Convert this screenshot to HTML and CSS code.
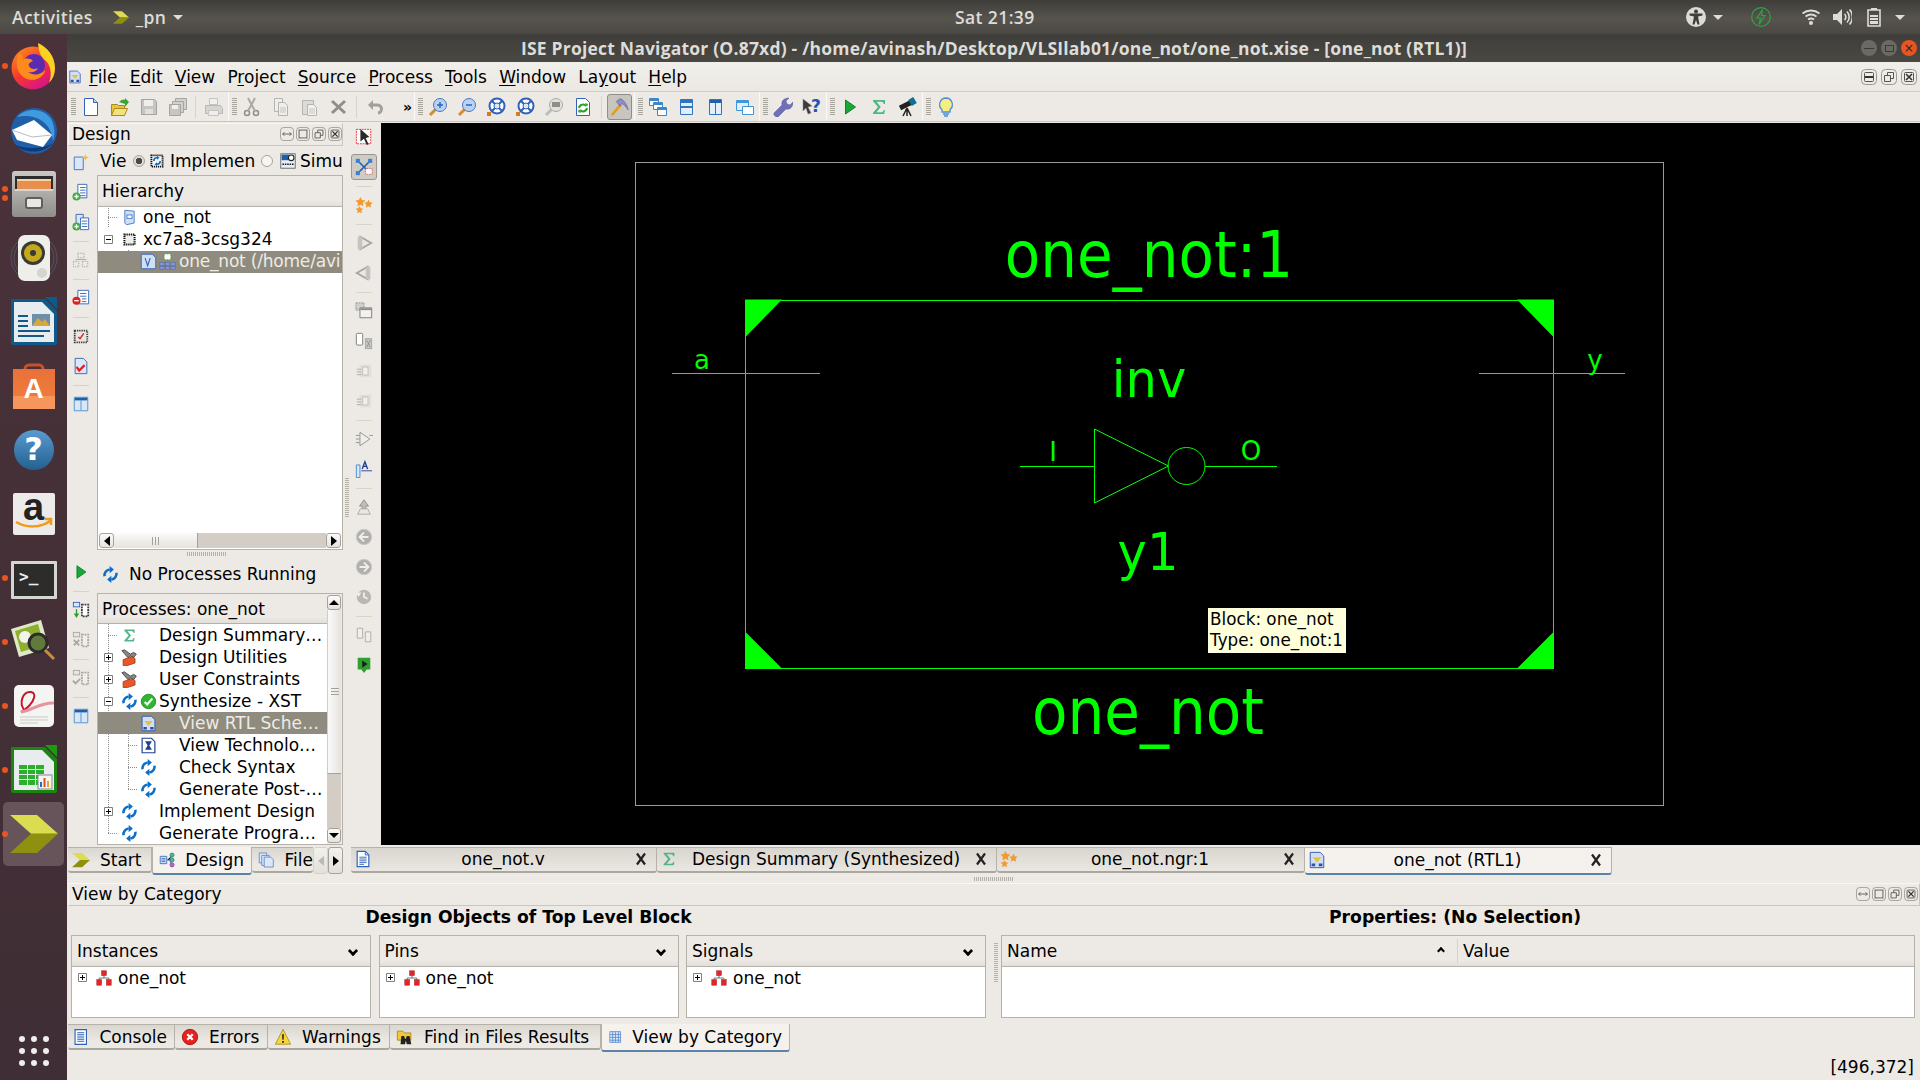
FILE: index.html
```html
<!DOCTYPE html>
<html lang="en">
<head>
  <meta charset="UTF-8">
  <title>ISE Project Navigator</title>
  <link rel="stylesheet" href="styles.css">
</head>
<body>
  <!-- icon sheet -->
  <svg class="defs" xmlns="http://www.w3.org/2000/svg">
    <defs>
      <linearGradient id="g-fox" x1="0" y1="0" x2="0.7" y2="1"><stop offset="0" stop-color="#ff9a1f"/><stop offset=".55" stop-color="#f5372e"/><stop offset="1" stop-color="#d6128c"/></linearGradient>
      <linearGradient id="g-store" x1="0" y1="0" x2="0" y2="1"><stop offset="0" stop-color="#e9703a"/><stop offset="1" stop-color="#f0813e"/></linearGradient>
      <linearGradient id="g-help" x1="0" y1="0" x2="0" y2="1"><stop offset="0" stop-color="#5a9bd0"/><stop offset="1" stop-color="#24608f"/></linearGradient>
      <linearGradient id="g-grey" x1="0" y1="0" x2="0" y2="1"><stop offset="0" stop-color="#c9c8c4"/><stop offset="1" stop-color="#8f8e8a"/></linearGradient>

      <symbol id="ise" viewBox="0 0 144 114"><path fill="#dcdc50" d="M0 0h81l63 56H63z"/><path fill="#909010" d="M63 56h81l-63 58H0z"/></symbol>

      <!-- dock -->
      <symbol id="d-firefox" viewBox="0 0 50 50"><circle cx="24" cy="27" r="21.500" fill="url(#g-fox)"/><path fill="#ffd21f" d="M29 2c9 4 17 13 17 25 0 6-2 11-6 15 3-8 2-17-3-22-3-3-7-5-8-18z"/><circle cx="25" cy="24" r="11" fill="#5a2bb0"/><path fill="#ff8a1c" d="M10 12c-2 5-3 9-2 14 2 10 12 15 20 12 5-2 8-6 8-9-4 5-12 6-17 2 5 1 9-1 10-4-3 2-8 1-9-2-1-2 1-4 4-5-3-3-8-3-10-1 0-3 0-5-4-7z"/></symbol>
      <symbol id="d-thunderbird" viewBox="0 0 50 50"><circle cx="25" cy="26" r="23" fill="#1f5fa8"/><path fill="#0d3a78" d="M6 40c8 8 28 10 38-2-6 5-25 7-38 2z"/><path fill="#3f9ae0" d="M8 12C16 3 34 2 42 14c3 5 5 14 2 22-1-10-6-18-14-22-6-3-14-4-22-2z"/><path fill="#fff" d="M3 25l22-10 18 15-9 12L8 35z"/><path fill="none" stroke="#b7bcc6" d="M3 25l20 7 20-2"/></symbol>
      <symbol id="d-files" viewBox="0 0 50 50"><rect x="3" y="2" width="44" height="46" rx="3" fill="url(#g-grey)"/><rect x="6" y="7" width="38" height="15" fill="#2b2b2b"/><rect x="8" y="10" width="34" height="10" fill="#e98f4e"/><rect x="8" y="10" width="34" height="2" fill="#f7d3a5"/><rect x="6" y="20" width="38" height="2" fill="#d8d6d2"/><rect x="17" y="29" width="16" height="10" rx="2" fill="#e8e8e6" stroke="#5f5f5d" stroke-width="2"/></symbol>
      <symbol id="d-sound" viewBox="0 0 50 50"><g fill="none" stroke="#5b6d80" stroke-opacity=".55"><circle cx="25" cy="25" r="23"/><circle cx="25" cy="25" r="20"/></g><rect x="9" y="2" width="32" height="46" rx="7" fill="#eeeeea"/><circle cx="24" cy="20" r="12" fill="#3b3a30"/><circle cx="24" cy="20" r="9" fill="#c4a81d"/><circle cx="24" cy="20" r="3" fill="#3b3a30"/><circle cx="33" cy="40" r="5" fill="#d5d5d0"/></symbol>
      <symbol id="d-writer" viewBox="0 0 50 50"><path fill="#0f5a8a" d="M2 2h34l12 12v32a2 2 0 0 1-2 2H4a2 2 0 0 1-2-2z"/><path fill="#e8ecee" d="M5 5h28l12 12v28H5z"/><path fill="#0f5a8a" d="M36 0h12v12z"/><path fill="#0f5a8a" d="M9 18h10v2H9zM9 23h10v2H9zM9 28h10v2H9zM9 33h32v2H9zM9 38h26v2H9z"/><rect x="23" y="17" width="18" height="12" fill="#6d8fa8"/><path fill="#d8a93a" d="M23 29l6-8 4 4 3-3 5 7z"/></symbol>
      <symbol id="d-store" viewBox="0 0 50 50"><path fill="none" stroke="#c4532a" stroke-width="3" d="M16 14V8a4 4 0 0 1 4-4h10a4 4 0 0 1 4 4v6"/><path fill="url(#g-store)" d="M4 8h42v40H4z"/><path fill="#f6955c" d="M4 35h42v13H4z"/></symbol>
      <symbol id="d-help" viewBox="0 0 50 50"><circle cx="25" cy="25" r="20" fill="url(#g-help)"/></symbol>
      <symbol id="d-amazon" viewBox="0 0 50 50"><rect x="4" y="4" width="42" height="42" rx="2" fill="#ecebe9"/><path fill="none" stroke="#f29a1c" stroke-width="2.500" d="M7 33c10 6 25 6 34-1M36 30h6v6"/></symbol>
      <symbol id="d-terminal" viewBox="0 0 50 50"><rect x="2" y="8" width="46" height="38" rx="1" fill="#d5d5d2"/><rect x="5" y="11" width="40" height="32" fill="#2c2c2a"/></symbol>
      <symbol id="d-viewer" viewBox="0 0 50 50"><path fill="#dfe8c8" d="M2 12L32 3l8 28-30 9z"/><path fill="#8eb02e" d="M6 14l23-7 6 21-23 7z"/><circle cx="16" cy="20" r="6" fill="#f3f3ee"/><circle cx="29" cy="26" r="9" fill="#5f7a3c" stroke="#2b2b2b" stroke-width="3"/><path stroke="#c98e3c" stroke-width="3" d="M36 33l9 9"/></symbol>
      <symbol id="d-pdf" viewBox="0 0 50 50"><rect x="5" y="4" width="40" height="42" rx="5" fill="#f4f4f2"/><path fill="none" stroke="#c4172c" stroke-width="2" d="M16 30c-7-8-2-20 6-19 6 1 3 9-2 14-3 3-6 5-8 6"/><path fill="none" stroke="#e5949c" stroke-width="3" d="M12 31c10-1 20-10 33-9"/><path stroke="#c9c9c6" d="M11 36h28M11 39h28M11 42h18"/></symbol>
      <symbol id="d-calc" viewBox="0 0 50 50"><path fill="#1c8512" d="M2 2h34l12 12v32a2 2 0 0 1-2 2H4a2 2 0 0 1-2-2z"/><path fill="#e8ecee" d="M5 5h28l12 12v28H5z"/><path fill="#1c9a12" d="M36 0h12v12z"/><path fill="#2ab02c" d="M10 20h25v20H10z"/><path stroke="#e8ecee" d="M10 24.500h25M10 29.500h25M10 34.500h25M18.500 20v20M26.500 20v20"/><rect x="29" y="30" width="14" height="14" fill="#f4f4f2" stroke="#888"/><path fill="#2070c0" d="M31 37h2v5h-2z"/><path fill="#e05020" d="M34.500 33h2v9h-2z"/><path fill="#e8a820" d="M38 36h2v6h-2z"/></symbol>

      <!-- window chrome -->
      <symbol id="w-float" viewBox="0 0 16 16"><rect x=".5" y=".5" width="15" height="15" rx="4" fill="none" stroke="#9a9892"/><path fill="none" stroke="#55534e" d="M3 8h10M5 6L3 8l2 2M11 6l2 2-2 2"/></symbol>
      <symbol id="w-max" viewBox="0 0 16 16"><rect x=".5" y=".5" width="15" height="15" rx="4" fill="none" stroke="#9a9892"/><rect x="3.500" y="3.500" width="9" height="9" fill="none" stroke="#55534e"/></symbol>
      <symbol id="w-restore" viewBox="0 0 16 16"><rect x=".5" y=".5" width="15" height="15" rx="4" fill="none" stroke="#9a9892"/><path fill="none" stroke="#55534e" d="M3.500 6.500h6v6h-6zM6.500 6.500v-3h6v6h-3"/></symbol>
      <symbol id="w-close" viewBox="0 0 16 16"><rect x=".5" y=".5" width="15" height="15" rx="4" fill="none" stroke="#9a9892"/><rect x="3.500" y="3.500" width="9" height="9" rx="1" fill="none" stroke="#55534e"/><path stroke="#333" stroke-width="1.600" d="M5 5l6 6M11 5l-6 6"/></symbol>
      <symbol id="w-min" viewBox="0 0 16 16"><rect x=".5" y=".5" width="15" height="15" rx="4" fill="none" stroke="#9a9892"/><rect x="3.500" y="3.500" width="9" height="9" rx="1" fill="none" stroke="#55534e"/><path stroke="#333" stroke-width="2" d="M4 8h8"/></symbol>

      <!-- toolbar -->
      <symbol id="t-new" viewBox="0 0 20 20"><path fill="#fff" stroke="#2f62b8" d="M3.500 1.500h9l4 4v13h-13z"/><path fill="#c8d8f0" stroke="#2f62b8" d="M12.500 1.500v4h4"/></symbol>
      <symbol id="t-open" viewBox="0 0 20 20"><path fill="#e8c43c" stroke="#a88a20" d="M1.500 7.500h6l1 1h6v10h-13z"/><path fill="#f6e27a" stroke="#a88a20" d="M1.500 18.500l3-7h13l-3 7z"/><path fill="#36a82e" d="M9 5c3-3 5-3 6-2V1l4 4-4 5V7c-2-1-4-1-6-2z"/></symbol>
      <symbol id="t-save" viewBox="0 0 20 20"><path fill="#c6c5c1" stroke="#a5a4a0" d="M2.500 2.500h13l2 2v13h-15z"/><rect x="5" y="3" width="9" height="6" fill="#efeeea"/><rect x="6" y="12" width="8" height="5" fill="#e0dfdb"/></symbol>
      <symbol id="t-saveall" viewBox="0 0 20 20"><path fill="#d2d1cd" stroke="#a5a4a0" d="M7.500 1.500h11v11h-11z"/><path fill="#d2d1cd" stroke="#a5a4a0" d="M4.500 4.500h11v11h-11z"/><path fill="#c6c5c1" stroke="#a5a4a0" d="M1.500 7.500h11v11h-11z"/><rect x="4" y="8" width="6" height="4" fill="#efeeea"/></symbol>
      <symbol id="t-print" viewBox="0 0 20 20"><path fill="#f0f0ee" stroke="#c4c3bf" d="M5.500 1.500h8v6h-8z"/><path fill="#d6d5d1" stroke="#b8b7b3" d="M1.500 8.500h15l2 3v5h-17z"/><path fill="#eee" stroke="#c4c3bf" d="M4.500 13.500h10v5h-10z"/></symbol>
      <symbol id="t-cut" viewBox="0 0 20 20"><g fill="none" stroke="#8f8e8a" stroke-width="1.500"><circle cx="5" cy="16" r="2.500"/><circle cx="14" cy="16" r="2.500"/></g><path stroke="#aaa9a5" stroke-width="2" d="M6 14L13 1M13 14L6 1"/></symbol>
      <symbol id="t-copy" viewBox="0 0 20 20"><g fill="#eeeeea" stroke="#b4b3af"><path d="M3.500 1.500h8v13h-8z"/><path d="M7.500 5.500h6l3 3v10h-9z"/></g><path stroke="#c6c5c1" d="M9 11h6M9 13h6M9 15h6"/></symbol>
      <symbol id="t-paste" viewBox="0 0 20 20"><path fill="#dcdbd7" stroke="#b4b3af" d="M2.500 3.500h11v14h-11z"/><path fill="#f2f1ee" stroke="#b4b3af" d="M7.500 7.500h6l3 3v8h-9z"/><path stroke="#c6c5c1" d="M9 12h6M9 14h6M9 16h6"/></symbol>
      <symbol id="t-del" viewBox="0 0 20 20"><path stroke="#8f8e8a" stroke-width="3" d="M3 4l13 12M16 4L3 16"/></symbol>
      <symbol id="t-undo" viewBox="0 0 20 20"><path fill="none" stroke="#a09f9b" stroke-width="3" d="M6 8h6a4 4 0 0 1 1 8"/><path fill="#a09f9b" d="M8 3v10L3 8z"/></symbol>
      <symbol id="t-zoomin" viewBox="0 0 20 20"><path stroke="#d88a30" stroke-width="3" d="M8 12l-6 6"/><circle cx="12" cy="8" r="6.500" fill="#b8d4f4" stroke="#4a78c0"/><path stroke="#2f62b8" stroke-width="1.500" d="M9 8h6M12 5v6"/></symbol>
      <symbol id="t-zoomout" viewBox="0 0 20 20"><path stroke="#d88a30" stroke-width="3" d="M8 12l-6 6"/><circle cx="12" cy="8" r="6.500" fill="#b8d4f4" stroke="#4a78c0"/><path stroke="#2f62b8" stroke-width="1.500" d="M9 8h6"/></symbol>
      <symbol id="t-fit" viewBox="0 0 20 20"><circle cx="11" cy="9" r="7.500" fill="#fff" stroke="#2f62b8" stroke-width="2"/><circle cx="11" cy="9" r="3" fill="#dbe7f7" stroke="#2f62b8"/><path stroke="#2f62b8" stroke-width="2" d="M6 4l3 3M16 4l-3 3M6 14l3-3M16 14l-3-3"/><rect x="1" y="15" width="4" height="4" fill="#d87a20"/></symbol>
      <symbol id="t-zoomgrey" viewBox="0 0 20 20"><path stroke="#bdbcb8" stroke-width="3" d="M8 12l-6 6"/><circle cx="12" cy="8" r="6.500" fill="#e2e1dd" stroke="#aaa9a5"/><rect x="8" y="5" width="8" height="5" fill="#8f8e8a"/></symbol>
      <symbol id="t-refresh" viewBox="0 0 20 20"><path fill="#fff" stroke="#2f62b8" d="M3.500 1.500h9l4 4v13h-13z"/><path fill="none" stroke="#2ea02a" stroke-width="2" d="M6 11a4 4 0 0 1 7-2M14 11a4 4 0 0 1-7 2"/><path fill="#2ea02a" d="M12 6l3 1-1 3zM8 16l-3-1 1-3z"/></symbol>
      <symbol id="t-hammer" viewBox="0 0 22 22"><path stroke="#e0a020" stroke-width="3" d="M2 20L12 8"/><path fill="#8f8fc8" stroke="#6d6da8" d="M7 5l4-3c4 1 7 5 9 12-3-4-5-6-7-7l-2 3z"/></symbol>
      <symbol id="t-win1" viewBox="0 0 20 20"><g fill="#fff" stroke="#3f86c8"><path d="M1.500 1.500h9v7h-9z"/><path d="M5.500 5.500h9v7h-9z"/><path d="M9.500 10.500h9v8h-9z"/></g><g fill="#3f86c8"><path d="M2 2h8v2H2zM6 6h8v2H6zM10 11h8v2h-8z"/></g></symbol>
      <symbol id="t-win2" viewBox="0 0 20 20"><path fill="#e3eefa" stroke="#2f76c0" d="M3.500 2.500h12v15h-12z"/><path fill="#2f76c0" d="M4 3h11v3H4zM4 9h11v2H4z"/></symbol>
      <symbol id="t-win3" viewBox="0 0 20 20"><path fill="#e3eefa" stroke="#2f76c0" d="M3.500 2.500h12v15h-12z"/><path fill="#1f5ea8" d="M4 3h11v3H4z"/><path stroke="#2f76c0" d="M9.500 6v11"/></symbol>
      <symbol id="t-win4" viewBox="0 0 20 20"><path fill="#e3eefa" stroke="#3f96d8" d="M1.500 3.500h12v10h-12z"/><path fill="#3f96d8" d="M2 4h11v2H2z"/><path fill="#fff" stroke="#3f96d8" d="M7.500 9.500h11v8h-11z"/></symbol>
      <symbol id="t-wrench" viewBox="0 0 20 20"><path fill="#7070b8" stroke="#5858a0" stroke-width=".5" d="M1 16l8-8c-1-4 2-7 7-7l-3 3 1 3 3 1 3-3c0 5-3 8-7 7l-8 8c-2 1-5-2-4-4z"/></symbol>
      <symbol id="t-whatis" viewBox="0 0 20 20"><path fill="#3c3c3c" stroke="#888" stroke-width=".5" d="M1 2l9 7-4 1 3 6-3 1-2-6-3 3z"/></symbol>
      <symbol id="t-play" viewBox="0 0 20 20"><path fill="#18a838" stroke="#0f8028" d="M5.500 3v14l10-7z"/></symbol>
      <symbol id="t-sigma" viewBox="0 0 20 20"><path fill="#4fb884" d="M4 3h12v4h-1.200c-.4-1.500-1.300-2.300-2.800-2.300H7.500L11.800 10l-4.300 5.300H12c1.500 0 2.400-.8 2.800-2.300H16l-.8 4H4v-1.300L9 10 4 4.300z"/></symbol>
      <symbol id="t-scope" viewBox="0 0 20 20"><path stroke="#222" stroke-width="1.500" d="M9 11l-4 8M9 11l4 8M9 11v8"/><path stroke="#222" stroke-width="5" d="M2 11L14 5"/><path stroke="#0d7090" stroke-width="7" d="M12 6l5-3"/></symbol>
      <symbol id="t-bulb" viewBox="0 0 20 20"><path fill="#f8ee80" stroke="#4a90d8" stroke-width="1.300" d="M10 1a6.500 6.500 0 0 0-4 11.500V15h8v-2.500A6.500 6.500 0 0 0 10 1z"/><path stroke="#4a90d8" stroke-width="1.500" d="M7 17h6M8 19h4"/></symbol>

      <!-- palette -->
      <symbol id="p-select" viewBox="0 0 20 20"><rect x="1.500" y="1.500" width="16" height="16" fill="#fff" stroke="#e02020" stroke-dasharray="2 1"/><path fill="#2a2a2a" d="M6 1l10 9-4 1 3 7-2 1-3-7-4 3z"/></symbol>
      <symbol id="p-net" viewBox="0 0 22 22"><path stroke="#2060b8" stroke-width="2" d="M4 4l14 14M18 4L4 18"/><rect x="1" y="1" width="5" height="5" fill="#3d80d0"/><rect x="16" y="1" width="5" height="5" fill="#3d80d0"/><rect x="1" y="16" width="5" height="5" fill="#3d80d0"/><rect x="13" y="13" width="8" height="7" fill="#fff" stroke="#e02020" stroke-dasharray="1 1"/></symbol>
      <symbol id="p-stars" viewBox="0 0 20 20"><g fill="#f09a30"><path d="M6 1l1.700 3.500 3.800.5-2.800 2.700.7 3.800L6 9.700l-3.400 1.800.7-3.800L.5 5l3.800-.5zM15 4l1.400 3 3.300.4-2.400 2.300.6 3.300-2.900-1.600-2.900 1.600.6-3.300-2.400-2.300 3.300-.4zM5 11l1.300 2.700 3 .4-2.200 2.100.5 3L5 17.800l-2.600 1.400.5-3-2.200-2.100 3-.4z"/></g></symbol>
      <symbol id="p-tri-r" viewBox="0 0 20 20"><path fill="#e8e7e3" stroke="#a5a4a0" stroke-width="2" d="M6 3l12 7-12 7z"/><path fill="#c4c3bf" d="M3 3h5v14H3z"/></symbol>
      <symbol id="p-tri-l" viewBox="0 0 20 20"><path fill="#e8e7e3" stroke="#a5a4a0" stroke-width="2" d="M14 3L2 10l12 7z"/><path fill="#c4c3bf" d="M12 3h5v14h-5z"/></symbol>
      <symbol id="p-chipwin" viewBox="0 0 20 20"><rect x="1" y="1" width="9" height="8" fill="#d0cfcb" stroke="#8f8e8a" stroke-dasharray="2 1"/><path fill="#f2f1ee" stroke="#777" d="M5.500 6.500h13v11h-13z"/><path fill="#888" d="M6 7h12v2H6z"/></symbol>
      <symbol id="p-rectx" viewBox="0 0 20 20"><rect x="1.500" y="1.500" width="7" height="13" rx="1" fill="#fff" stroke="#777"/><rect x="11.500" y="7.500" width="7" height="11" fill="#c9c8c4" stroke="#a5a4a0"/><path stroke="#8f8e8a" d="M13 9l4 8M17 9l-4 8"/></symbol>
      <symbol id="p-fadedoc" viewBox="0 0 20 20"><rect x="5" y="3" width="13" height="14" fill="#e0dfdb"/><path fill="#efeeea" stroke="#bdbcb8" d="M8.500 5.500h6v9h-6z"/><path stroke="#aaa9a5" d="M2 8h5M2 11h5M2 14h5"/></symbol>
      <symbol id="p-gate" viewBox="0 0 20 20"><path fill="#efeeea" stroke="#8f8e8a" d="M5.500 2.500v15l11-7.500z"/><path stroke="#8f8e8a" d="M1 6h4M1 10h4M1 14h4M16 6h4"/></symbol>
      <symbol id="p-label" viewBox="0 0 20 20"><path fill="#d8e8fa" stroke="#3f86d8" d="M1.500 5.500h4v14h-4z"/><path fill="none" stroke="#1f3f98" stroke-width="1.500" d="M8 10l3-8 3 8M9 7h4"/><path stroke="#1f3f98" d="M7 12h12"/></symbol>
      <symbol id="p-up" viewBox="0 0 20 20"><path fill="#bdbcb8" stroke="#8f8e8a" d="M8 2h4v3h3l-5 7-5-7h3z" transform="rotate(180 10 7)"/><path fill="#e8e7e3" stroke="#aaa9a5" d="M3 18l3-6h8l3 6z"/></symbol>
      <symbol id="p-back" viewBox="0 0 20 20"><circle cx="10" cy="10" r="8.500" fill="#b0afab" stroke="#c9c8c4"/><path fill="none" stroke="#efeeea" stroke-width="2" d="M15 10H6M10 5l-5 5 5 5"/></symbol>
      <symbol id="p-forward" viewBox="0 0 20 20"><circle cx="10" cy="10" r="8.500" fill="#b0afab" stroke="#c9c8c4"/><path fill="none" stroke="#efeeea" stroke-width="2" d="M5 10h9M10 5l5 5-5 5"/></symbol>
      <symbol id="p-history" viewBox="0 0 20 20"><circle cx="10" cy="10" r="8" fill="#b8b7b3"/><path fill="none" stroke="#efeeea" stroke-width="2" d="M10 5v5l4 2"/><path fill="#efeeea" d="M1 5l6 0-3 5z"/></symbol>
      <symbol id="p-pair" viewBox="0 0 20 20"><g fill="#efeeea" stroke="#aaa9a5"><path d="M2.500 2.500h6v11h-6z"/><path d="M11.500 6.500h6v11h-6z"/></g></symbol>
      <symbol id="p-pin" viewBox="0 0 20 20"><path fill="#2ea02e" d="M3 2h14v13h-4l-3 4-3-4H3z"/><path fill="#1d1d1d" d="M8 5l6 4-6 4z"/></symbol>

      <!-- side columns -->
      <symbol id="s-newsrc" viewBox="0 0 20 20"><path fill="#dbe7f7" stroke="#3a6fc0" d="M2.500 4.500h10v14h-10z"/><path fill="#f0c030" d="M15 1l1 3 3 1-3 1-1 3-1-3-3-1 3-1z"/></symbol>
      <symbol id="s-addsrc" viewBox="0 0 20 20"><path fill="#fff" stroke="#2f62b8" d="M6.500 1.500h10v15h-10z"/><path stroke="#2f62b8" d="M9 5h6M9 8h6M9 11h6M9 14h6"/><circle cx="5" cy="15" r="4.500" fill="#3eae3e"/><path stroke="#fff" stroke-width="1.500" d="M2.500 15h5M5 12.500v5"/></symbol>
      <symbol id="s-addcopy" viewBox="0 0 20 20"><path fill="#dbe7f7" stroke="#2f62b8" d="M4.500 1.500h8v14h-8z"/><path fill="#fff" stroke="#2f62b8" d="M9.500 5.500h9v13h-9z"/><path stroke="#2f62b8" d="M11 9h6M11 12h6M11 15h6"/><circle cx="5" cy="15" r="4.500" fill="#3eae3e"/><path stroke="#fff" stroke-width="1.500" d="M2.500 15h5M5 12.500v5"/></symbol>
      <symbol id="s-hier" viewBox="0 0 20 20"><g fill="none" stroke="#a8a7a3" stroke-dasharray="1.500 1"><rect x="6.500" y="2.500" width="7" height="5"/><rect x="1.500" y="11.500" width="6" height="6"/><rect x="11.500" y="11.500" width="6" height="6"/></g><path stroke="#a8a7a3" d="M4 9.500h12"/></symbol>
      <symbol id="s-remsrc" viewBox="0 0 20 20"><path fill="#fff" stroke="#2f62b8" d="M6.500 1.500h12v15h-12z"/><path stroke="#2f62b8" d="M9 5h7M9 8h7M11 11h5M11 14h5"/><circle cx="5" cy="13" r="4.500" fill="#e02020"/><path stroke="#fff" stroke-width="1.500" d="M2.500 13h5"/></symbol>
      <symbol id="s-chipchk" viewBox="0 0 20 20"><rect x="3" y="4" width="14" height="13" fill="#e6e5e1" stroke="#3c3c3c" stroke-dasharray="1.500 1" stroke-width="2"/><path fill="none" stroke="#e02020" stroke-width="1.600" d="M7 11l2 2 4-6"/></symbol>
      <symbol id="s-docchk" viewBox="0 0 20 20"><path fill="#dbe7f7" stroke="#2f62b8" d="M3.500 1.500h9l4 4v13h-13z"/><path fill="none" stroke="#e02020" stroke-width="2.500" d="M5 11l3 4 6-6"/></symbol>
      <symbol id="s-table" viewBox="0 0 20 20"><path fill="#dbe7f7" stroke="#4a90d0" d="M2.500 2.500h15v15h-15z"/><path fill="#1f5ea8" d="M3 3h14v3H3z"/><path stroke="#4a90d0" d="M10 6v11"/></symbol>
      <symbol id="s-chipdown" viewBox="0 0 20 20"><rect x="1.500" y="1.500" width="7" height="5" fill="#dbe7f7" stroke="#2f62b8"/><path stroke="#2ea02e" stroke-width="1.500" d="M5 9v8"/><path fill="#2ea02e" d="M2 14h6l-3 5z"/><rect x="11" y="4" width="7" height="13" fill="#fff" stroke="#3c3c3c" stroke-width="2" stroke-dasharray="2 1"/></symbol>
      <symbol id="s-chipx" viewBox="0 0 20 20"><rect x="1.500" y="1.500" width="7" height="5" fill="#e6e5e1" stroke="#a8a7a3"/><path stroke="#a8a7a3" stroke-width="2" d="M2 10l6 6M8 10l-6 6"/><rect x="11" y="4" width="7" height="13" fill="#efeeea" stroke="#a8a7a3" stroke-width="2" stroke-dasharray="2 1"/></symbol>
      <symbol id="s-chipok" viewBox="0 0 20 20"><rect x="1.500" y="1.500" width="7" height="5" fill="#e6e5e1" stroke="#a8a7a3"/><path fill="none" stroke="#a8a7a3" stroke-width="2" d="M1 13l3 3 5-5"/><rect x="11" y="4" width="7" height="13" fill="#efeeea" stroke="#a8a7a3" stroke-width="2" stroke-dasharray="2 1"/></symbol>

      <!-- tree -->
      <symbol id="n-source" viewBox="0 0 20 20"><path fill="#cfe0f5" stroke="#3a6fc0" d="M4.500 1.500l11 1v14l-9 2-2-2z"/><rect x="7" y="7" width="6" height="4" fill="#fff" stroke="#3a6fc0"/></symbol>
      <symbol id="n-chip" viewBox="0 0 20 20"><rect x="4" y="4" width="12" height="12" fill="#eeeeea" stroke="#111" stroke-width="2.400" stroke-dasharray="1.500 1"/></symbol>
      <symbol id="r-impl" viewBox="0 0 20 20"><rect x="3" y="3" width="14" height="14" fill="#f4f4f0" stroke="#111" stroke-width="2.400" stroke-dasharray="1.500 1"/><path fill="none" stroke="#0d6ec8" stroke-width="2" d="M6 10a4 4 0 0 1 4-4M14 10a4 4 0 0 1-4 4"/><path fill="#0d6ec8" d="M10 3.500l3 2.500-3 2.500zM10 11.500v5l-3-2.500z"/></symbol>
      <symbol id="r-sim" viewBox="0 0 20 20"><rect x="1" y="1" width="18" height="18" fill="#e8eef8" stroke="#555"/><rect x="2" y="2" width="9" height="7" fill="#1f5ea8"/><circle cx="14" cy="6" r="3.500" fill="#fff" stroke="#222" stroke-width="1.400"/><path stroke="#222" stroke-width="2" stroke-dasharray="2 1" d="M3 14h14"/></symbol>
      <symbol id="n-verilog" viewBox="0 0 20 20"><path fill="#cfe0f5" stroke="#2f62b8" d="M1.500 1.500h13l4 4v13h-17z"/><path fill="none" stroke="#2f62b8" stroke-width="1.300" d="M6 6l3 9 3-9"/></symbol>
      <symbol id="n-netlist" viewBox="0 0 20 20"><rect x="6" y="1" width="8" height="7" fill="#fff" stroke="#2ea02e" stroke-dasharray="2 1"/><g fill="#8898d0" stroke="#5068b0" stroke-width=".7"><rect x="1" y="11" width="5" height="4"/><rect x="7.500" y="11" width="5" height="4"/><rect x="14" y="11" width="5" height="4"/><rect x="1" y="16" width="5" height="3"/><rect x="7.500" y="16" width="5" height="3"/><rect x="14" y="16" width="5" height="3"/></g></symbol>
      <symbol id="n-tools" viewBox="0 0 20 20"><path fill="#e8562a" stroke="#a83818" d="M2.500 12.500l11-4 3 3v5l-9 3h-5z"/><path fill="#888" stroke="#444" d="M1 2l3-1 7 5 4-2 3 2-3 4-4-2-3 2z"/></symbol>
      <symbol id="n-sync" viewBox="0 0 20 20"><path fill="none" stroke="#0d6ec8" stroke-width="3" d="M3 12a7 7 0 0 1 6-8M17 8a7 7 0 0 1-6 8"/><path fill="#0d6ec8" d="M9 0l5 4-5 4.500zM11 11.500V20l-5-4z"/></symbol>
      <symbol id="n-ok" viewBox="0 0 20 20"><circle cx="10" cy="10" r="8.500" fill="#2fb52f" stroke="#1e8a1e"/><path fill="none" stroke="#fff" stroke-width="2.400" d="M5.500 10.500l3 3 6-7"/></symbol>
      <symbol id="n-viewrtl" viewBox="0 0 20 20"><path fill="#cfe0f5" stroke="#2f4fa8" d="M2.500 1.500h11l4 4v13h-15z"/><path fill="#e8c040" d="M5 7h10l-5 6z"/><path fill="#2f4fa8" d="M4 14h4v3H4zM12 14h4v3h-4z"/></symbol>
      <symbol id="n-viewtech" viewBox="0 0 20 20"><path fill="#fff" stroke="#20408f" stroke-width="1.400" d="M2.500 1.500h11l4 4v13h-15z"/><path fill="#20408f" d="M6 5h8l-3 5 3 5H6l3-5z"/></symbol>
      <symbol id="n-inst" viewBox="0 0 20 20"><g fill="#e0262a" stroke="#a81418" stroke-width=".6"><rect x="7" y="1" width="6" height="6"/><rect x="1" y="12" width="6" height="7"/><rect x="13" y="12" width="6" height="7"/></g><path fill="none" stroke="#555" d="M10 7v3M4 12v-2h12v2"/></symbol>

      <!-- tabs -->
      <symbol id="b-design" viewBox="0 0 20 20"><path fill="#dbe7f7" stroke="#2f62b8" d="M1.500 5.500h8v9h-8z"/><path stroke="#2f62b8" d="M3 8h5M3 10h5M3 12h5M10 10h3l2-5M13 10l2 5"/><circle cx="16" cy="4" r="2.500" fill="#54b09a" stroke="#2e8a70"/><circle cx="16" cy="10" r="2.500" fill="#54b09a" stroke="#2e8a70"/><circle cx="16" cy="16" r="2.500" fill="#b06ac8" stroke="#8848a8"/></symbol>
      <symbol id="b-files" viewBox="0 0 20 20"><g fill="#dbe7f7" stroke="#5a86c8"><path d="M1.500 1.500h9v12h-9z"/><path d="M4.500 4.500h9v12h-9z"/><path d="M7.500 6.500h8l3 3v9h-11z"/></g></symbol>
      <symbol id="b-doc" viewBox="0 0 20 20"><path fill="#fff" stroke="#2f62b8" stroke-width="1.300" d="M3.500 1.500h9l4 4v13h-13z"/><path fill="#cfe0f5" stroke="#2f62b8" d="M12.500 1.500v4h4z"/><path stroke="#2f62b8" d="M6 8h8M6 10h8M6 12h8M6 14h8M6 16h5"/></symbol>
      <symbol id="b-console" viewBox="0 0 20 20"><path fill="#fff" stroke="#2f62b8" stroke-width="1.300" d="M3.500 1.500h13v17h-13z"/><path stroke="#2f62b8" d="M6 5h8M6 7h8M6 9h8M6 11h8M6 13h8M6 15h8"/></symbol>
      <symbol id="b-error" viewBox="0 0 20 20"><circle cx="10" cy="10" r="8.500" fill="#e8231f" stroke="#a81410"/><path stroke="#fff" stroke-width="2.500" d="M7 7l6 6M13 7l-6 6"/></symbol>
      <symbol id="b-warn" viewBox="0 0 20 20"><path fill="#f8d838" stroke="#a89020" d="M10 1.500l8.500 16.500h-17z"/><path fill="#222" d="M9 7h2l-.3 6h-1.400zM9 14.500h2v2H9z"/></symbol>
      <symbol id="b-find" viewBox="0 0 20 20"><path fill="#f0c838" stroke="#a88a20" d="M1.500 3.500h6l2 2h7v8h-15z"/><path fill="#222" d="M6 9h3l1 3h1l1-3h3l2 9h-5l-1-4-1 4H5z"/></symbol>
      <symbol id="b-grid" viewBox="0 0 20 20"><path fill="#dbe7f7" stroke="#4a80c8" d="M2.500 2.500h15v15h-15zM2.500 6.500h15M2.500 10.500h15M2.500 14.500h15M6.500 2.500v15M10.500 2.500v15M14.500 2.500v15"/></symbol>
      <symbol id="b-x" viewBox="0 0 14 14"><path fill="none" stroke="#222" stroke-width="2.200" d="M3 1.500l8 11M11 1.500l-8 11"/></symbol>

      <!-- panel top right -->
      <symbol id="sys-a11y" viewBox="0 0 20 20"><circle cx="10" cy="10" r="10" fill="#dcdcd8"/><circle cx="10" cy="4.500" r="2" fill="#3f3e3a"/><path fill="#3f3e3a" d="M3.500 6.500h13v2L12 9.500l1.500 8h-2L10 13l-1.500 4.500h-2l1.500-8-4.500-1z"/></symbol>
      <symbol id="sys-power" viewBox="0 0 20 20"><circle cx="10" cy="10" r="9.300" fill="none" stroke="#2fa344" stroke-width="1.200"/><path fill="none" stroke="#2fa344" stroke-width="1.200" d="M11.500 2.500L6 11h3.500L8 17.500 14 8.500h-3.500z"/></symbol>
      <symbol id="sys-wifi" viewBox="0 0 20 20"><g fill="none" stroke="#dcdcd8" stroke-width="1.800"><path d="M1.500 6.500c5-4 12-4 17 0"/><path d="M4.500 9.500c3.500-2.500 7.500-2.500 11 0"/><path d="M7 12.500c2-1.300 4-1.300 6 0"/></g><circle cx="10" cy="16" r="2" fill="#dcdcd8"/></symbol>
      <symbol id="sys-vol" viewBox="0 0 20 20"><path fill="#dcdcd8" d="M1 7h4l5-5v16l-5-5H1z"/><path fill="none" stroke="#dcdcd8" stroke-width="1.600" d="M12.500 7a4 4 0 0 1 0 6M15 4.500a8 8 0 0 1 0 11M17.500 2.500a11 11 0 0 1 0 15"/></symbol>
      <symbol id="sys-batt" viewBox="0 0 20 20"><path fill="none" stroke="#dcdcd8" stroke-width="1.600" d="M4 3h12v16H4z"/><path fill="#dcdcd8" d="M7 1h6v2H7zM6 8h8v2H6zM6 11h8v2H6zM6 14h8v3H6z"/></symbol>
      <symbol id="plus" viewBox="0 0 9 9"><path fill="#fff" stroke="#808080" d="M.5.500h8v8h-8z"/><path stroke="#000" d="M2 4.500h5M4.500 2v5"/></symbol>
      <symbol id="minus" viewBox="0 0 9 9"><path fill="#fff" stroke="#808080" d="M.5.500h8v8h-8z"/><path stroke="#000" d="M2 4.500h5"/></symbol>
    </defs>
  </svg>

  <header class="topbar">
    <span class="activities">Activities</span>
    <span class="app-menu"><svg class="app-menu-ic"><use href="#ise"/></svg>_pn<i class="caret"></i></span>
    <span class="clock">Sat 21:39</span>
    <span class="sys">
      <svg class="sys-a11y"><use href="#sys-a11y"/></svg><i class="caret"></i>
      <svg class="sys-power"><use href="#sys-power"/></svg>
      <svg class="sys-wifi"><use href="#sys-wifi"/></svg>
      <svg class="sys-vol"><use href="#sys-vol"/></svg>
      <svg class="sys-batt"><use href="#sys-batt"/></svg><i class="caret caret-end"></i>
    </span>
  </header>

  <div class="desktop">
    <nav class="dock">
      <div class="dock-item run"><svg class="d"><use href="#d-firefox"/></svg></div>
      <div class="dock-item"><svg class="d"><use href="#d-thunderbird"/></svg></div>
      <div class="dock-item run2"><svg class="d"><use href="#d-files"/></svg></div>
      <div class="dock-item"><svg class="d"><use href="#d-sound"/></svg></div>
      <div class="dock-item"><svg class="d"><use href="#d-writer"/></svg></div>
      <div class="dock-item"><svg class="d"><use href="#d-store"/></svg><span class="store-a">A</span></div>
      <div class="dock-item"><svg class="d"><use href="#d-help"/></svg><span class="help-q">?</span></div>
      <div class="dock-item"><svg class="d"><use href="#d-amazon"/></svg><span class="amazon-a">a</span></div>
      <div class="dock-item run"><svg class="d"><use href="#d-terminal"/></svg><span class="term-p">&gt;_</span></div>
      <div class="dock-item run"><svg class="d"><use href="#d-viewer"/></svg></div>
      <div class="dock-item run"><svg class="d"><use href="#d-pdf"/></svg></div>
      <div class="dock-item run"><svg class="d"><use href="#d-calc"/></svg></div>
      <div class="dock-item run active"><svg class="d-ise"><use href="#ise"/></svg></div>
      <div class="dock-apps">
        <i></i><i></i><i></i><i></i><i></i><i></i><i></i><i></i><i></i>
      </div>
    </nav>

    <main class="window">
      <div class="titlebar">
        <span class="title">ISE Project Navigator (O.87xd) - /home/avinash/Desktop/VLSIlab01/one_not/one_not.xise - [one_not (RTL1)]</span>
        <span class="wm">
          <i class="wm-btn"><b class="wm-min"></b></i>
          <i class="wm-btn"><b class="wm-max"></b></i>
          <i class="wm-btn wm-close">&#215;</i>
        </span>
      </div>

      <div class="menubar">
        <svg class="menu-ic"><use href="#n-viewrtl"/></svg>
        <span class="menu"><u>F</u>ile</span>
        <span class="menu"><u>E</u>dit</span>
        <span class="menu"><u>V</u>iew</span>
        <span class="menu">P<u>r</u>oject</span>
        <span class="menu"><u>S</u>ource</span>
        <span class="menu"><u>P</u>rocess</span>
        <span class="menu"><u>T</u>ools</span>
        <span class="menu"><u>W</u>indow</span>
        <span class="menu">La<u>y</u>out</span>
        <span class="menu"><u>H</u>elp</span>
        <span class="mdi">
          <svg><use href="#w-min"/></svg>
          <svg><use href="#w-restore"/></svg>
          <svg><use href="#w-close"/></svg>
        </span>
      </div>

      <div class="toolbar">
        <div class="tb-group">
          <i class="grip"></i>
          <span class="tb"><svg><use href="#t-new"/></svg></span>
          <span class="tb"><svg><use href="#t-open"/></svg></span>
          <span class="tb"><svg><use href="#t-save"/></svg></span>
          <span class="tb"><svg><use href="#t-saveall"/></svg></span>
          <i class="tb-sep"></i>
          <span class="tb"><svg><use href="#t-print"/></svg></span>
        </div>
        <div class="tb-group">
          <i class="grip"></i>
          <span class="tb"><svg><use href="#t-cut"/></svg></span>
          <span class="tb"><svg><use href="#t-copy"/></svg></span>
          <span class="tb"><svg><use href="#t-paste"/></svg></span>
          <span class="tb"><svg><use href="#t-del"/></svg></span>
          <i class="tb-sep"></i>
          <span class="tb"><svg><use href="#t-undo"/></svg></span>
          <span class="tb-more">&#187;</span>
        </div>
        <div class="tb-group">
          <i class="grip"></i>
          <span class="tb"><svg><use href="#t-zoomin"/></svg></span>
          <span class="tb"><svg><use href="#t-zoomout"/></svg></span>
          <span class="tb"><svg><use href="#t-fit"/></svg></span>
          <span class="tb"><svg><use href="#t-fit"/></svg></span>
          <span class="tb"><svg><use href="#t-zoomgrey"/></svg></span>
          <span class="tb"><svg><use href="#t-refresh"/></svg></span>
          <i class="tb-sep wide"></i>
          <span class="tb on"><svg><use href="#t-hammer"/></svg></span>
        </div>
        <div class="tb-group">
          <i class="grip"></i>
          <span class="tb"><svg><use href="#t-win1"/></svg></span>
          <span class="tb"><svg><use href="#t-win2"/></svg></span>
          <span class="tb"><svg><use href="#t-win3"/></svg></span>
          <span class="tb"><svg><use href="#t-win4"/></svg></span>
        </div>
        <div class="tb-group">
          <i class="grip"></i>
          <span class="tb"><svg><use href="#t-wrench"/></svg></span>
          <span class="tb whatis"><svg><use href="#t-whatis"/></svg><b>?</b></span>
        </div>
        <div class="tb-group">
          <i class="grip"></i>
          <span class="tb"><svg><use href="#t-play"/></svg></span>
          <span class="tb"><svg><use href="#t-sigma"/></svg></span>
          <span class="tb"><svg><use href="#t-scope"/></svg></span>
        </div>
        <div class="tb-group last">
          <i class="grip"></i>
          <span class="tb"><svg><use href="#t-bulb"/></svg></span>
        </div>
      </div>

      <div class="workspace">
        <section class="leftpanel">
          <div class="dock-title">
            <span>Design</span>
            <span class="dock-btns">
              <svg><use href="#w-float"/></svg><svg><use href="#w-max"/></svg><svg><use href="#w-restore"/></svg><svg><use href="#w-close"/></svg>
            </span>
          </div>

          <div class="panel-row hier-row">
            <div class="side">
              <span class="sb"><svg><use href="#s-newsrc"/></svg></span>
              <span class="sb"><svg><use href="#s-addsrc"/></svg></span>
              <span class="sb"><svg><use href="#s-addcopy"/></svg></span>
              <i class="sb-sep"></i>
              <span class="sb"><svg><use href="#s-hier"/></svg></span>
              <i class="sb-sep"></i>
              <span class="sb"><svg><use href="#s-remsrc"/></svg></span>
              <i class="sb-sep"></i>
              <span class="sb"><svg><use href="#s-chipchk"/></svg></span>
              <span class="sb"><svg><use href="#s-docchk"/></svg></span>
              <i class="sb-sep"></i>
              <span class="sb"><svg><use href="#s-table"/></svg></span>
            </div>
            <div class="panel-main">
              <div class="view-row">
                <span class="view-label">Vie</span>
                <i class="radio checked"></i>
                <svg class="vr-ic"><use href="#r-impl"/></svg>
                <span class="view-impl">Implemen</span>
                <i class="radio"></i>
                <svg class="vr-ic vr-sim"><use href="#r-sim"/></svg>
                <span class="view-sim">Simu</span>
              </div>
              <div class="box hier-box">
                <div class="box-head">Hierarchy</div>
                <div class="tree">
                  <div class="row"><i class="tw tw-v tw-h"></i><span class="ti"><svg><use href="#n-source"/></svg></span><span class="row-text">one_not</span></div>
                  <div class="row"><i class="tw"><svg class="exp"><use href="#minus"/></svg></i><span class="ti"><svg><use href="#n-chip"/></svg></span><span class="row-text">xc7a8-3csg324</span></div>
                  <div class="row sel"><i class="tw"></i><i class="tw tw-lone"></i><span class="ti ti-v"><svg><use href="#n-verilog"/></svg></span><span class="ti ti-net"><svg><use href="#n-netlist"/></svg></span><span class="row-text row-tight">one_not (/home/avi</span></div>
                </div>
                <div class="hscroll">
                  <span class="sc-btn"><i class="ar ar-l"></i></span>
                  <span class="sc-thumb"><i></i></span>
                  <span class="sc-trough"></span>
                  <span class="sc-btn"><i class="ar ar-r"></i></span>
                </div>
              </div>
            </div>
          </div>

          <div class="hsplit"><i></i></div>

          <div class="panel-row proc-row">
            <div class="side">
              <span class="sb"><svg><use href="#t-play"/></svg></span>
              <i class="sb-sep"></i>
              <span class="sb"><svg><use href="#s-chipdown"/></svg></span>
              <span class="sb"><svg><use href="#s-chipx"/></svg></span>
              <i class="sb-sep"></i>
              <span class="sb"><svg><use href="#s-chipok"/></svg></span>
              <i class="sb-sep"></i>
              <span class="sb"><svg><use href="#s-table"/></svg></span>
            </div>
            <div class="panel-main">
              <div class="proc-status"><svg><use href="#n-sync"/></svg>No Processes Running</div>
              <div class="box proc-box">
                <div class="proc-list">
                  <div class="box-head">Processes: one_not</div>
                  <div class="tree">
                    <div class="row"><i class="tw tw-v tw-h"></i><span class="ti"><svg><use href="#t-sigma"/></svg></span><span class="ti-gap"></span>Design Summary&#8230;</div>
                    <div class="row"><i class="tw tw-v"><svg class="exp"><use href="#plus"/></svg></i><span class="ti"><svg><use href="#n-tools"/></svg></span><span class="ti-gap"></span>Design Utilities</div>
                    <div class="row"><i class="tw tw-v"><svg class="exp"><use href="#plus"/></svg></i><span class="ti"><svg><use href="#n-tools"/></svg></span><span class="ti-gap"></span>User Constraints</div>
                    <div class="row"><i class="tw tw-v"><svg class="exp"><use href="#minus"/></svg></i><span class="ti"><svg><use href="#n-sync"/></svg></span><span class="ti-gap"><svg><use href="#n-ok"/></svg></span>Synthesize - XST</div>
                    <div class="row sel"><i class="tw tw-v"></i><i class="tw tw-v tw-h"></i><span class="ti ti-v"><svg><use href="#n-viewrtl"/></svg></span><span class="ti-sub"></span>View RTL Sche&#8230;</div>
                    <div class="row"><i class="tw tw-v"></i><i class="tw tw-v tw-h"></i><span class="ti ti-v"><svg><use href="#n-viewtech"/></svg></span><span class="ti-sub"></span>View Technolo&#8230;</div>
                    <div class="row"><i class="tw tw-v"></i><i class="tw tw-v tw-h"></i><span class="ti ti-v"><svg><use href="#n-sync"/></svg></span><span class="ti-sub"></span>Check Syntax</div>
                    <div class="row"><i class="tw tw-v"></i><i class="tw tw-end"></i><span class="ti ti-v"><svg><use href="#n-sync"/></svg></span><span class="ti-sub"></span>Generate Post-&#8230;</div>
                    <div class="row"><i class="tw tw-v"><svg class="exp"><use href="#plus"/></svg></i><span class="ti"><svg><use href="#n-sync"/></svg></span><span class="ti-gap"></span>Implement Design</div>
                    <div class="row"><i class="tw tw-end"></i><span class="ti"><svg><use href="#n-sync"/></svg></span><span class="ti-gap"></span>Generate Progra&#8230;</div>
                  </div>
                </div>
                <div class="vscroll">
                  <span class="sc-btn"><i class="ar ar-u"></i></span>
                  <span class="sc-thumb"><i></i></span>
                  <span class="sc-trough"></span>
                  <span class="sc-btn"><i class="ar ar-d"></i></span>
                </div>
              </div>
            </div>
          </div>

          <div class="tabs left-tabs">
            <span class="tab"><svg><use href="#ise"/></svg>Start</span>
            <span class="tab active"><svg><use href="#b-design"/></svg>Design</span>
            <span class="tab tab-clip"><svg><use href="#b-files"/></svg>File</span>
            <span class="tab-scroll"><i class="ar ar-l dim"></i></span>
            <span class="tab-scroll on"><i class="ar ar-r"></i></span>
          </div>
        </section>

        <div class="vsplit"><i></i></div>

        <section class="center">
          <div class="center-top">
            <div class="palette">
              <span class="pb"><svg><use href="#p-select"/></svg></span>
              <span class="pb on"><svg><use href="#p-net"/></svg></span>
              <i class="sb-sep"></i>
              <span class="pb"><svg><use href="#p-stars"/></svg></span>
              <i class="sb-sep"></i>
              <span class="pb"><svg><use href="#p-tri-r"/></svg></span>
              <span class="pb"><svg><use href="#p-tri-l"/></svg></span>
              <i class="sb-sep"></i>
              <span class="pb"><svg><use href="#p-chipwin"/></svg></span>
              <span class="pb"><svg><use href="#p-rectx"/></svg></span>
              <span class="pb"><svg><use href="#p-fadedoc"/></svg></span>
              <span class="pb"><svg><use href="#p-fadedoc"/></svg></span>
              <i class="sb-sep"></i>
              <span class="pb"><svg><use href="#p-gate"/></svg></span>
              <span class="pb"><svg><use href="#p-label"/></svg></span>
              <i class="sb-sep"></i>
              <span class="pb"><svg><use href="#p-up"/></svg></span>
              <span class="pb"><svg><use href="#p-back"/></svg></span>
              <span class="pb"><svg><use href="#p-forward"/></svg></span>
              <span class="pb"><svg><use href="#p-history"/></svg></span>
              <i class="sb-sep"></i>
              <span class="pb"><svg><use href="#p-pair"/></svg></span>
              <span class="pb"><svg><use href="#p-pin"/></svg></span>
            </div>

            <div class="canvas">
              <svg class="schematic" viewBox="381 123 1539 721">
                <rect class="sheet" x="635.500" y="161.500" width="1028" height="643"/>
                <rect class="wire" x="745.500" y="299.500" width="808" height="368"/>
                <path class="solid" d="M745 299h37l-37 38zM1554 299h-37l37 38zM745 668h37l-37-37zM1554 668h-37l37-37z"/>
                <path class="wire" d="M672 372.500h148M1479 372.500h146M1020 465.500h74M1205 465.500h72"/>
                <path class="wire thin" d="M1094.500 428.500v74l74-37z"/>
                <circle class="wire thin" cx="1186.500" cy="465.500" r="18.500"/>
                <text class="lbl" transform="translate(1149 276) scale(1 1.1)" font-size="58">one_not:1</text>
                <text class="lbl" transform="translate(1149 396) scale(1 1.05)" font-size="49.500">inv</text>
                <text class="lbl" transform="translate(1148 569) scale(1 1.05)" font-size="49.500">y1</text>
                <text class="lbl" transform="translate(1148 733) scale(1 1.1)" font-size="58">one_not</text>
                <text class="lbl" x="702" y="368" font-size="26">a</text>
                <text class="lbl" x="1595" y="368" font-size="26">y</text>
                <text class="lbl" x="1053" y="460" font-size="26">I</text>
                <text class="lbl" x="1251" y="459" font-size="26">O</text>
              </svg>
              <div class="tooltip">Block: one_not<br>Type: one_not:1</div>
            </div>
          </div>

          <div class="tabs doc-tabs">
            <span class="doc-tab w1"><svg><use href="#b-doc"/></svg><span>one_not.v</span><svg class="x"><use href="#b-x"/></svg></span>
            <span class="doc-tab w2"><svg><use href="#t-sigma"/></svg><span>Design Summary (Synthesized)</span><svg class="x"><use href="#b-x"/></svg></span>
            <span class="doc-tab w3"><svg><use href="#p-stars"/></svg><span>one_not.ngr:1</span><svg class="x"><use href="#b-x"/></svg></span>
            <span class="doc-tab w4 active"><svg><use href="#n-viewrtl"/></svg><span>one_not (RTL1)</span><svg class="x"><use href="#b-x"/></svg></span>
          </div>
        </section>
      </div>

      <div class="hsplit main-split"><i></i></div>

      <section class="bottom">
        <div class="dock-title wide">
          <span>View by Category</span>
          <span class="dock-btns">
            <svg><use href="#w-float"/></svg><svg><use href="#w-max"/></svg><svg><use href="#w-restore"/></svg><svg><use href="#w-close"/></svg>
          </span>
        </div>

        <div class="cat-heads">
          <strong class="cat-left">Design Objects of Top Level Block</strong>
          <strong class="cat-right">Properties: (No Selection)</strong>
        </div>

        <div class="cat-tables">
          <div class="box cat">
            <div class="box-head cat-head"><span>Instances</span><i class="chev"></i></div>
            <div class="cat-row"><i class="tw-small"><svg class="exp"><use href="#plus"/></svg></i><svg class="inst"><use href="#n-inst"/></svg>one_not</div>
          </div>
          <div class="box cat">
            <div class="box-head cat-head"><span>Pins</span><i class="chev"></i></div>
            <div class="cat-row"><i class="tw-small"><svg class="exp"><use href="#plus"/></svg></i><svg class="inst"><use href="#n-inst"/></svg>one_not</div>
          </div>
          <div class="box cat">
            <div class="box-head cat-head"><span>Signals</span><i class="chev"></i></div>
            <div class="cat-row"><i class="tw-small"><svg class="exp"><use href="#plus"/></svg></i><svg class="inst"><use href="#n-inst"/></svg>one_not</div>
          </div>
          <div class="tables-split"><i></i></div>
          <div class="box props">
            <div class="box-head props-head">
              <span class="props-name">Name<i class="chev up"></i></span>
              <span class="props-value">Value</span>
            </div>
          </div>
        </div>

        <div class="tabs bottom-tabs">
          <span class="tab"><svg><use href="#b-console"/></svg>Console</span>
          <span class="tab"><svg><use href="#b-error"/></svg>Errors</span>
          <span class="tab"><svg><use href="#b-warn"/></svg>Warnings</span>
          <span class="tab"><svg><use href="#b-find"/></svg>Find in Files Results</span>
          <span class="tab active"><svg><use href="#b-grid"/></svg>View by Category</span>
        </div>

        <div class="statusbar">[496,372]</div>
      </section>
    </main>
  </div>
</body>
</html>
```

FILE: styles.css
```css
:root {
  --chrome: #edeae5;
  --line: #b5b2aa;
  --sel: #8f8b7e;
  --green: #00ff00;
}

* {
  box-sizing: border-box;
}

html, body {
  margin: 0;
  padding: 0;
  height: 1080px;
  overflow: hidden;
}

body {
  width: 1920px;
  display: flex;
  flex-direction: column;
  font-family: "DejaVu Sans", sans-serif;
  font-size: 17px;
  color: #000;
  background: var(--chrome);
}

i {
  font-style: normal;
}

.defs {
  position: absolute;
  width: 0;
  height: 0;
}

/* top panel */
.topbar {
  height: 34px;
  flex: none;
  display: flex;
  align-items: center;
  position: relative;
  background: linear-gradient(#3e3d39, #57544e 55%, #4a4843);
  color: #dddcd8;
  font-family: "Open Sans", sans-serif;
  font-weight: 600;
  font-size: 17.500px;
  letter-spacing: .4px;
}

.activities {
  margin-left: 12px;
}

.app-menu {
  display: flex;
  align-items: center;
  margin-left: 20px;
}

.app-menu-ic {
  width: 16px;
  height: 13px;
  margin-right: 7px;
}

.caret {
  display: inline-block;
  width: 0;
  height: 0;
  margin-left: 7px;
  border-left: 5px solid transparent;
  border-right: 5px solid transparent;
  border-top: 5px solid #dddcd8;
}

.caret-end {
  margin-left: 11px;
}

.clock {
  position: absolute;
  left: 955px;
}

.sys {
  margin-left: auto;
  margin-right: 15px;
  display: flex;
  align-items: center;
}

.sys svg {
  width: 20px;
  height: 20px;
}

.sys .sys-power {
  margin-left: 28px;
}

.sys .sys-wifi {
  margin-left: 30px;
}

.sys .sys-vol {
  margin-left: 11px;
}

.sys .sys-batt {
  margin-left: 12px;
}

/* launcher */
.desktop {
  flex: 1;
  min-height: 0;
  display: flex;
}

.dock {
  width: 67px;
  flex: none;
  display: flex;
  flex-direction: column;
  background: linear-gradient(#4b323a, #3f2e35);
}

.dock-item {
  height: 64px;
  flex: none;
  display: flex;
  align-items: center;
  justify-content: center;
  position: relative;
}

.dock-item .d {
  width: 50px;
  height: 50px;
}

.dock-item.run::before,
.dock-item.run2::before {
  content: "";
  position: absolute;
  left: 2px;
  top: 29px;
  width: 6px;
  height: 6px;
  border-radius: 50%;
  background: #e95420;
}

.dock-item.run2::before {
  top: 24px;
  box-shadow: 0 9px 0 #e95420;
}

.dock-item.active {
  margin: 0 3px;
  border-radius: 5px;
  background: #66545a;
}

.dock-item.active::before {
  left: -1px;
}

.d-ise {
  width: 48px;
  height: 38px;
}

.store-a,
.help-q,
.amazon-a,
.term-p {
  position: absolute;
}

.store-a {
  top: 19px;
  font: bold 28px "Liberation Sans", sans-serif;
  color: #fff;
}

.help-q {
  top: 12px;
  font: bold 32px "DejaVu Sans", sans-serif;
  color: #fff;
}

.amazon-a {
  top: 4px;
  font: bold 38px "Liberation Sans", sans-serif;
  color: #222;
}

.term-p {
  left: 19px;
  top: 21px;
  font: bold 16px "DejaVu Sans Mono", monospace;
  color: #eee;
}

.dock-apps {
  margin-top: auto;
  margin-bottom: 14px;
  align-self: center;
  display: grid;
  grid-template-columns: repeat(3, 6px);
  gap: 6px;
}

.dock-apps i {
  width: 6px;
  height: 6px;
  border-radius: 50%;
  background: #eeeeec;
}

/* window */
.window {
  flex: 1;
  min-width: 0;
  display: flex;
  flex-direction: column;
}

.titlebar {
  height: 28px;
  flex: none;
  display: flex;
  align-items: center;
  position: relative;
  background: linear-gradient(#3f3e3a, #4a4843);
  color: #dddcd8;
  font-family: "Open Sans", sans-serif;
  font-weight: 700;
  font-size: 17.500px;
  letter-spacing: .2px;
}

.title {
  margin-left: 454px;
  white-space: nowrap;
}

.wm {
  margin-left: auto;
  margin-right: 3px;
  display: flex;
  gap: 4px;
}

.wm-btn {
  width: 16px;
  height: 16px;
  border-radius: 50%;
  display: flex;
  align-items: center;
  justify-content: center;
  background: #6a6963;
  color: #2a2a28;
}

.wm-close {
  background: #e95420;
  font-size: 16px;
  font-weight: 400;
  line-height: 1;
}

.wm-min {
  width: 10px;
  border-top: 1px solid #3a3a37;
}

.wm-max {
  width: 9px;
  height: 7px;
  border: 1px solid #3a3a37;
}

.menubar {
  height: 30px;
  flex: none;
  display: flex;
  align-items: center;
  padding-left: 1px;
  background: linear-gradient(#f1efeb, #ebe8e3);
  border-bottom: 1px solid #cfccc5;
}

.menu-ic {
  width: 14px;
  height: 16px;
  margin-right: 1px;
}

.menu {
  padding: 0 6.100px;
}

.menu u {
  text-underline-offset: 2px;
}

.mdi {
  margin-left: auto;
  margin-right: 3px;
  display: flex;
  gap: 4px;
}

.mdi svg {
  width: 16px;
  height: 16px;
}

/* toolbar */
.toolbar {
  height: 30px;
  flex: none;
  display: flex;
  padding-left: 1px;
  border-bottom: 1px solid #c9c6bf;
}

.tb-group {
  display: flex;
  align-items: center;
  padding-left: 3px;
  border-right: 1px solid #fbfaf8;
}

.tb-group.last {
  border-right: 0;
}

.grip {
  width: 5px;
  height: 18px;
  background: repeating-linear-gradient(#a8a59d 0 1px, transparent 1px 2px);
}

.tb {
  width: 29px;
  height: 26px;
  display: flex;
  align-items: center;
  justify-content: center;
  position: relative;
}

.tb svg {
  width: 20px;
  height: 20px;
}

.tb.on::before {
  content: "";
  position: absolute;
  inset: 0 2px;
  border: 1px solid #8f8d86;
  border-radius: 3px;
  background: #c8c5bf;
}

.tb.on svg {
  position: relative;
}

.whatis b {
  position: absolute;
  left: 14px;
  top: 2px;
  color: #2156b0;
  font-size: 17px;
}

.tb-sep {
  width: 7px;
  height: 22px;
  background: linear-gradient(#d6d3cc, #d6d3cc) center / 1px 100% no-repeat;
}

.tb-sep.wide {
  width: 8px;
}

.tb-more {
  width: 25px;
  padding-right: 2px;
  text-align: right;
  font-weight: 700;
  font-size: 14px;
}

/* workspace */
.workspace {
  height: 753px;
  flex: none;
  display: flex;
}

.leftpanel {
  width: 278px;
  flex: none;
  display: flex;
  flex-direction: column;
  padding-left: 1px;
}

.dock-title {
  height: 23px;
  width: 275px;
  margin-top: 1px;
  flex: none;
  display: flex;
  align-items: center;
  justify-content: space-between;
  padding: 0 0 2px 3px;
  border: 1px solid #f8f7f4;
  border-right-color: #c9c6bf;
  border-bottom-color: #c9c6bf;
}

.dock-title.wide {
  width: auto;
  margin: 0 0 0 1px;
}

.dock-btns {
  display: flex;
  align-items: center;
  gap: 2px;
}

.dock-btns svg {
  width: 14px;
  height: 14px;
}

.panel-row {
  display: flex;
  flex: none;
}

.hier-row {
  height: 403px;
  margin-top: 1px;
}

.proc-row {
  height: 288px;
}

.side {
  width: 29px;
  flex: none;
  display: flex;
  flex-direction: column;
  align-items: center;
  padding-right: 3px;
}

.sb,
.pb {
  width: 26px;
  height: 30px;
  flex: none;
  display: flex;
  align-items: center;
  justify-content: center;
  position: relative;
}

.sb svg,
.pb svg {
  width: 18px;
  height: 18px;
}

.sb-sep {
  width: 16px;
  height: 8px;
  flex: none;
  background: linear-gradient(#d6d3cc, #d6d3cc) center / 100% 1px no-repeat;
}

.panel-main {
  width: 246px;
  flex: none;
  display: flex;
  flex-direction: column;
}

.view-row {
  height: 28px;
  flex: none;
  display: flex;
  align-items: center;
  padding-bottom: 1px;
  white-space: nowrap;
}

.view-label {
  width: 29px;
  margin-left: 3px;
  flex: none;
}

.radio {
  width: 12px;
  height: 12px;
  margin: 0 4px;
  flex: none;
  border-radius: 50%;
  background: #f6f5f2;
  border: 1px solid #a5a29a;
}

.radio.checked {
  background: radial-gradient(#4a4a48 0 3px, #dfddd8 3.500px);
}

.vr-ic {
  width: 16px;
  height: 16px;
  flex: none;
}

.vr-sim {
  margin-left: 3px;
}

.view-impl {
  width: 87px;
  margin-left: 5px;
  flex: none;
}

.view-sim {
  margin-left: 4px;
}

.box {
  border: 1px solid var(--line);
  background: #fff;
}

.hier-box {
  flex: 1;
  min-height: 0;
  display: flex;
  flex-direction: column;
}

.box-head {
  height: 31px;
  flex: none;
  display: flex;
  align-items: center;
  padding-left: 4px;
  background: linear-gradient(#edeae5 80%, #e2dfd9);
  border-bottom: 1px solid var(--line);
}

.tree {
  flex: 1;
  min-height: 0;
  overflow: hidden;
}

.row {
  height: 22px;
  display: flex;
  align-items: center;
  white-space: nowrap;
}

.hier-box .row {
  padding-bottom: 2px;
}

.row.sel {
  background: var(--sel);
  color: #eeebe5;
}

.tw {
  width: 20px;
  height: 22px;
  flex: none;
  display: flex;
  align-items: center;
  justify-content: center;
}

.tw-v {
  background: repeating-linear-gradient(#8c8c8c 0 1px, transparent 1px 2px) 10px 0 / 1px 100% no-repeat;
}

.tw-h {
  background:
    repeating-linear-gradient(#8c8c8c 0 1px, transparent 1px 2px) 10px 0 / 1px 100% no-repeat,
    repeating-linear-gradient(90deg, #8c8c8c 0 1px, transparent 1px 2px) 10px 50% / 10px 1px no-repeat;
}

.tw-end,
.tw-lone {
  background:
    repeating-linear-gradient(#8c8c8c 0 1px, transparent 1px 2px) 10px 0 / 1px 50% no-repeat,
    repeating-linear-gradient(90deg, #8c8c8c 0 1px, transparent 1px 2px) 10px 50% / 10px 1px no-repeat;
}

.exp {
  width: 9px;
  height: 9px;
}

.ti {
  width: 22px;
  flex: none;
  display: flex;
  align-items: center;
  justify-content: center;
}

.ti svg,
.ti-gap svg {
  width: 17px;
  height: 17px;
}

.ti-gap {
  width: 19px;
  flex: none;
  display: flex;
  align-items: center;
}

.ti-sub {
  width: 20px;
  flex: none;
}

.ti-v {
  width: 21px;
}

.ti-net {
  width: 17px;
}

.row-text {
  margin-left: 3px;
}

.row-tight {
  letter-spacing: -.2px;
}

.hscroll {
  height: 16px;
  flex: none;
  display: flex;
  padding: 0 1px 1px;
}

.sc-btn {
  width: 15px;
  flex: none;
  display: flex;
  align-items: center;
  justify-content: center;
  background: linear-gradient(#fbfafa, #e6e3de);
  border: 1px solid #a5a29a;
  border-radius: 3px;
}

.sc-thumb {
  width: 84px;
  flex: none;
  display: flex;
  align-items: center;
  justify-content: center;
  background: linear-gradient(#fbfafa, #e6e3de);
  border-right: 1px solid #a5a29a;
}

.sc-thumb i {
  width: 8px;
  height: 8px;
  background: repeating-linear-gradient(90deg, #a5a29a 0 1px, transparent 1px 3px);
}

.sc-trough {
  flex: 1;
  background: #d3cdc5;
}

.ar {
  width: 0;
  height: 0;
}

.ar-l {
  border-top: 5px solid transparent;
  border-bottom: 5px solid transparent;
  border-right: 6px solid #000;
}

.ar-r {
  border-top: 5px solid transparent;
  border-bottom: 5px solid transparent;
  border-left: 6px solid #000;
}

.ar-u {
  border-left: 5px solid transparent;
  border-right: 5px solid transparent;
  border-bottom: 5px solid #000;
}

.ar-d {
  border-left: 5px solid transparent;
  border-right: 5px solid transparent;
  border-top: 5px solid #000;
}

.ar.dim {
  border-right-color: #bdbab3;
}

.hsplit {
  height: 7px;
  flex: none;
  display: flex;
  align-items: center;
  justify-content: center;
}

.hsplit i {
  width: 40px;
  height: 4px;
  background: repeating-linear-gradient(90deg, #b3b0a8 0 1px, transparent 1px 2px);
}

.proc-status {
  height: 36px;
  flex: none;
  display: flex;
  align-items: center;
  padding-left: 4px;
  padding-bottom: 2px;
  white-space: nowrap;
}

.proc-status svg {
  width: 17px;
  height: 17px;
  margin: 0 10px 0 1px;
}

.proc-box {
  height: 252px;
  flex: none;
  display: flex;
}

.proc-list {
  width: 229px;
  flex: none;
  display: flex;
  flex-direction: column;
}

.proc-list .box-head {
  height: 30px;
}

.vscroll {
  flex: 1;
  display: flex;
  flex-direction: column;
  padding: 1px 1px 1px 0;
  background: var(--chrome);
}

.vscroll .sc-btn {
  width: auto;
  height: 15px;
}

.vscroll .sc-thumb {
  width: auto;
  height: 164px;
  border-right: 0;
  border-left: 1px solid #d0cdc6;
  border-bottom: 1px solid #a5a29a;
  background: linear-gradient(90deg, #fbfafa, #e6e3de);
}

.vscroll .sc-thumb i {
  background: repeating-linear-gradient(#a5a29a 0 1px, transparent 1px 3px);
}

/* tabs */
.tabs {
  display: flex;
  flex: none;
}

.tab {
  height: 26px;
  flex: none;
  display: flex;
  align-items: center;
  padding: 0 7px 0 6px;
  white-space: nowrap;
  background: linear-gradient(#dad7d1, #ece9e4 70%);
  border-top: 1px solid var(--line);
  border-right: 1px solid var(--line);
  border-bottom: 2px solid #aaa7a0;
  border-radius: 0 0 3px 3px;
}

.tab svg {
  width: 18px;
  height: 18px;
  margin-right: 10px;
}

.tab:first-child {
  padding-left: 4px;
}

.tab.active {
  height: 28px;
  background: #f5f2ee;
  border-top: 0;
  border-bottom: 2px solid #5b83a8;
  border-left: 1px solid var(--line);
}

.left-tabs {
  height: 28px;
  margin-top: 2px;
  width: 275px;
}

.left-tabs .tab:first-child {
  width: 84px;
}

.left-tabs .tab.active {
  width: 100px;
}

.tab-clip {
  width: 61px;
}

.left-tabs .tab-clip {
  padding-right: 0;
  border-right: 0;
}

.tab-scroll {
  width: 15px;
  height: 27px;
  flex: none;
  display: flex;
  align-items: center;
  justify-content: center;
  background: linear-gradient(#f3f1ed, #e3e0da);
  border: 1px solid #d6d3cc;
  border-radius: 3px;
}

.tab-scroll.on {
  border-color: #a5a29a;
}

.vsplit {
  width: 5px;
  flex: none;
  padding-top: 356px;
}

.vsplit i {
  display: block;
  width: 4px;
  height: 40px;
  background: repeating-linear-gradient(#b3b0a8 0 1px, transparent 1px 2px);
}

.center {
  flex: 1;
  min-width: 0;
  display: flex;
  flex-direction: column;
}

.center-top {
  height: 723px;
  flex: none;
  display: flex;
}

.palette {
  width: 31px;
  flex: none;
  display: flex;
  flex-direction: column;
  align-items: center;
  padding-right: 3px;
}

.pb.on::before {
  content: "";
  position: absolute;
  inset: 2px 0;
  border: 1px solid #9a978f;
  border-radius: 3px;
  background: #cfccc5;
}

.pb.on svg {
  position: relative;
}

.canvas {
  flex: 1;
  margin-top: 1px;
  position: relative;
  background: #000;
}

.schematic {
  display: block;
  width: 100%;
  height: 100%;
}

.sheet {
  fill: none;
  stroke: #9a9a9a;
  stroke-width: 1;
  shape-rendering: crispEdges;
}

.wire {
  fill: none;
  stroke: var(--green);
  stroke-width: 1;
  shape-rendering: crispEdges;
}

.wire.thin {
  shape-rendering: auto;
}

.solid {
  fill: var(--green);
}

.lbl {
  fill: var(--green);
  text-anchor: middle;
  font-family: "DejaVu Sans", sans-serif;
}

.tooltip {
  position: absolute;
  left: 827px;
  top: 485px;
  width: 138px;
  height: 45px;
  padding: 1px 0 0 2px;
  background: #ffffdc;
  color: #000;
  font-size: 16.800px;
  line-height: 21px;
  white-space: nowrap;
}

.doc-tabs {
  height: 28px;
  margin-top: 2px;
  margin-left: 1px;
}

.doc-tab {
  height: 26px;
  flex: none;
  display: flex;
  align-items: center;
  padding: 0 8px 2px 3px;
  background: linear-gradient(#d9d6d0, #eae7e2);
  border-top: 1px solid var(--line);
  border-right: 1px solid var(--line);
  border-bottom: 2px solid #aaa7a0;
  border-radius: 0 0 3px 3px;
}

.doc-tab > svg {
  width: 18px;
  height: 18px;
  flex: none;
}

.doc-tab > span {
  flex: 1;
  text-align: center;
  white-space: nowrap;
}

.doc-tab .x {
  width: 14px;
  height: 14px;
}

.doc-tab.active {
  height: 28px;
  background: #f5f2ee;
  border-bottom-color: #5b83a8;
}

.w1 { width: 306px; }
.w2 { width: 340px; }
.w3 { width: 308px; }
.w4 { width: 307px; }

.main-split {
  height: 8px;
}

/* bottom panel */
.bottom {
  flex: 1;
  min-height: 0;
  display: flex;
  flex-direction: column;
}

.bottom .dock-btns {
  margin-right: 1px;
}

.cat-heads {
  height: 29px;
  flex: none;
  display: flex;
  align-items: center;
  padding-bottom: 7px;
  font-weight: 700;
  font-size: 17.200px;
  white-space: nowrap;
}

.cat-left {
  width: 929px;
  text-align: center;
}

.cat-right {
  width: 936px;
  text-align: center;
}

.cat-tables {
  height: 83px;
  flex: none;
  display: flex;
  padding-left: 4px;
}

.cat {
  width: 300px;
  flex: none;
  margin-right: 7.500px;
}

.cat-head {
  height: 31px;
  justify-content: space-between;
  padding: 0 8px 0 5px;
}

.chev {
  width: 8px;
  height: 8px;
  margin-right: 5px;
  border-right: 3px solid #000;
  border-bottom: 3px solid #000;
  transform: scale(.9) rotate(45deg);
}

.chev.up {
  transform: scale(.7) rotate(225deg);
  margin: 0 12px 0 0;
}

.cat-row {
  height: 22px;
  display: flex;
  align-items: center;
  padding: 0 0 1px 6px;
}

.tw-small {
  width: 18px;
  display: flex;
  align-items: center;
}

.inst {
  width: 16px;
  height: 16px;
  margin-right: 6px;
}

.tables-split {
  width: 7.500px;
  flex: none;
  padding-top: 8px;
}

.tables-split i {
  display: block;
  width: 4px;
  height: 40px;
  background: repeating-linear-gradient(#b3b0a8 0 1px, transparent 1px 2px);
}

.props {
  width: 914px;
  flex: none;
}

.props-head {
  padding-left: 0;
}

.props-name {
  width: 456px;
  padding-left: 5px;
  display: flex;
  align-items: center;
  justify-content: space-between;
  border-right: 1px solid #d6d3cc;
  height: 24px;
}

.props-value {
  padding-left: 5px;
}

.bottom-tabs {
  margin-top: 6px;
  padding-left: 1px;
}

.bottom-tabs .tab:nth-child(1) { width: 107px; }
.bottom-tabs .tab:nth-child(2) { width: 93px; }
.bottom-tabs .tab:nth-child(3) { width: 122px; }
.bottom-tabs .tab:nth-child(4) { width: 211px; }
.bottom-tabs .tab:nth-child(5) { width: 189px; }

.statusbar {
  flex: 1;
  display: flex;
  align-items: center;
  justify-content: flex-end;
  padding-right: 6px;
  padding-top: 2px;
}
```
